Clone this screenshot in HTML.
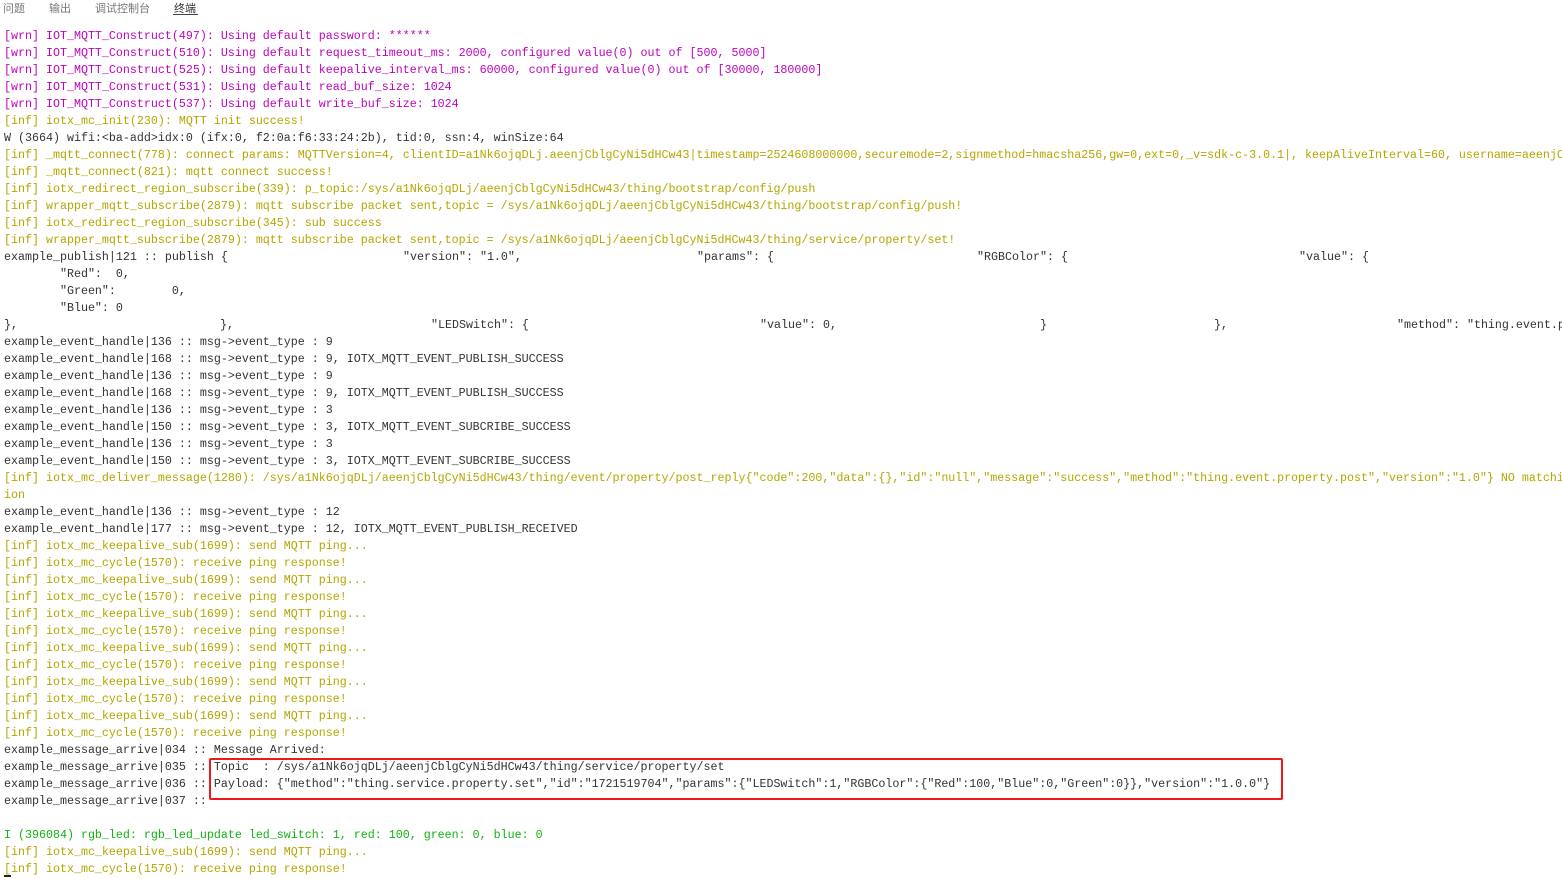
<!DOCTYPE html>
<html><head><meta charset="utf-8"><style>
body{margin:0;background:#fff;width:1562px;height:879px;overflow:hidden;position:relative;font-family:"Liberation Mono","Noto Sans CJK SC",monospace;}
.tabs{position:absolute;top:0;left:0;height:20px;font-family:"Liberation Sans","Noto Sans CJK SC",sans-serif;font-size:11px;color:#666;}
.tabs span{position:absolute;top:0px;white-space:nowrap;}
.ul{position:absolute;left:173px;top:14px;width:25px;height:1px;background:#444;}
.log{position:absolute;top:28px;left:4px;width:1558px;}
.l{height:17px;line-height:17px;font-size:11.67px;white-space:pre;position:relative;overflow:hidden;color:#333;}
.m{color:#bc05bc}.y{color:#b5a600}.g{color:#12b312}
.a{position:absolute;top:0}
.box{position:absolute;left:209px;top:758px;width:1070px;height:38px;border:2.5px solid #f01818;border-radius:2px;}
.cur{position:absolute;left:4px;top:875px;width:7px;height:2px;background:#222;}
</style></head><body>
<div class="tabs"><span style="left:3px;color:#777">问题</span><span style="left:49px;color:#777">输出</span><span style="left:95px;color:#777">调试控制台</span><span style="left:174px;color:#333">终端</span></div>
<div class="ul"></div>
<div class="log">
<div class="l m">[wrn] IOT_MQTT_Construct(497): Using default password: ******</div>
<div class="l m">[wrn] IOT_MQTT_Construct(510): Using default request_timeout_ms: 2000, configured value(0) out of [500, 5000]</div>
<div class="l m">[wrn] IOT_MQTT_Construct(525): Using default keepalive_interval_ms: 60000, configured value(0) out of [30000, 180000]</div>
<div class="l m">[wrn] IOT_MQTT_Construct(531): Using default read_buf_size: 1024</div>
<div class="l m">[wrn] IOT_MQTT_Construct(537): Using default write_buf_size: 1024</div>
<div class="l y">[inf] iotx_mc_init(230): MQTT init success!</div>
<div class="l">W (3664) wifi:&lt;ba-add&gt;idx:0 (ifx:0, f2:0a:f6:33:24:2b), tid:0, ssn:4, winSize:64</div>
<div class="l y">[inf] _mqtt_connect(778): connect params: MQTTVersion=4, clientID=a1Nk6ojqDLj.aeenjCblgCyNi5dHCw43|timestamp=2524608000000,securemode=2,signmethod=hmacsha256,gw=0,ext=0,_v=sdk-c-3.0.1|, keepAliveInterval=60, username=aeenjCblgCyNi5dHCw43</div>
<div class="l y">[inf] _mqtt_connect(821): mqtt connect success!</div>
<div class="l y">[inf] iotx_redirect_region_subscribe(339): p_topic:/sys/a1Nk6ojqDLj/aeenjCblgCyNi5dHCw43/thing/bootstrap/config/push</div>
<div class="l y">[inf] wrapper_mqtt_subscribe(2879): mqtt subscribe packet sent,topic = /sys/a1Nk6ojqDLj/aeenjCblgCyNi5dHCw43/thing/bootstrap/config/push!</div>
<div class="l y">[inf] iotx_redirect_region_subscribe(345): sub success</div>
<div class="l y">[inf] wrapper_mqtt_subscribe(2879): mqtt subscribe packet sent,topic = /sys/a1Nk6ojqDLj/aeenjCblgCyNi5dHCw43/thing/service/property/set!</div>
<div class="l">example_publish|121 :: publish {<span class="a" style="left:399px">"version": "1.0",</span><span class="a" style="left:693px">"params": {</span><span class="a" style="left:973px">"RGBColor": {</span><span class="a" style="left:1295px">"value": {</span></div>
<div class="l">        "Red":  0,</div>
<div class="l">        "Green":        0,</div>
<div class="l">        "Blue": 0</div>
<div class="l">},<span class="a" style="left:216px">},</span><span class="a" style="left:427px">"LEDSwitch": {</span><span class="a" style="left:756px">"value": 0,</span><span class="a" style="left:1036px">}</span><span class="a" style="left:1210px">},</span><span class="a" style="left:1393px">"method": "thing.event.property.post"</span></div>
<div class="l">example_event_handle|136 :: msg-&gt;event_type : 9</div>
<div class="l">example_event_handle|168 :: msg-&gt;event_type : 9, IOTX_MQTT_EVENT_PUBLISH_SUCCESS</div>
<div class="l">example_event_handle|136 :: msg-&gt;event_type : 9</div>
<div class="l">example_event_handle|168 :: msg-&gt;event_type : 9, IOTX_MQTT_EVENT_PUBLISH_SUCCESS</div>
<div class="l">example_event_handle|136 :: msg-&gt;event_type : 3</div>
<div class="l">example_event_handle|150 :: msg-&gt;event_type : 3, IOTX_MQTT_EVENT_SUBCRIBE_SUCCESS</div>
<div class="l">example_event_handle|136 :: msg-&gt;event_type : 3</div>
<div class="l">example_event_handle|150 :: msg-&gt;event_type : 3, IOTX_MQTT_EVENT_SUBCRIBE_SUCCESS</div>
<div class="l y">[inf] iotx_mc_deliver_message(1280): /sys/a1Nk6ojqDLj/aeenjCblgCyNi5dHCw43/thing/event/property/post_reply{"code":200,"data":{},"id":"null","message":"success","method":"thing.event.property.post","version":"1.0"} NO matching</div>
<div class="l y">ion</div>
<div class="l">example_event_handle|136 :: msg-&gt;event_type : 12</div>
<div class="l">example_event_handle|177 :: msg-&gt;event_type : 12, IOTX_MQTT_EVENT_PUBLISH_RECEIVED</div>
<div class="l y">[inf] iotx_mc_keepalive_sub(1699): send MQTT ping...</div>
<div class="l y">[inf] iotx_mc_cycle(1570): receive ping response!</div>
<div class="l y">[inf] iotx_mc_keepalive_sub(1699): send MQTT ping...</div>
<div class="l y">[inf] iotx_mc_cycle(1570): receive ping response!</div>
<div class="l y">[inf] iotx_mc_keepalive_sub(1699): send MQTT ping...</div>
<div class="l y">[inf] iotx_mc_cycle(1570): receive ping response!</div>
<div class="l y">[inf] iotx_mc_keepalive_sub(1699): send MQTT ping...</div>
<div class="l y">[inf] iotx_mc_cycle(1570): receive ping response!</div>
<div class="l y">[inf] iotx_mc_keepalive_sub(1699): send MQTT ping...</div>
<div class="l y">[inf] iotx_mc_cycle(1570): receive ping response!</div>
<div class="l y">[inf] iotx_mc_keepalive_sub(1699): send MQTT ping...</div>
<div class="l y">[inf] iotx_mc_cycle(1570): receive ping response!</div>
<div class="l">example_message_arrive|034 :: Message Arrived:</div>
<div class="l">example_message_arrive|035 :: Topic  : /sys/a1Nk6ojqDLj/aeenjCblgCyNi5dHCw43/thing/service/property/set</div>
<div class="l">example_message_arrive|036 :: Payload: {"method":"thing.service.property.set","id":"1721519704","params":{"LEDSwitch":1,"RGBColor":{"Red":100,"Blue":0,"Green":0}},"version":"1.0.0"}</div>
<div class="l">example_message_arrive|037 ::</div>
<div class="l"> </div>
<div class="l g">I (396084) rgb_led: rgb_led_update led_switch: 1, red: 100, green: 0, blue: 0</div>
<div class="l y">[inf] iotx_mc_keepalive_sub(1699): send MQTT ping...</div>
<div class="l y">[inf] iotx_mc_cycle(1570): receive ping response!</div>
</div>
<div class="box"></div>
<div class="cur"></div>
</body></html>
